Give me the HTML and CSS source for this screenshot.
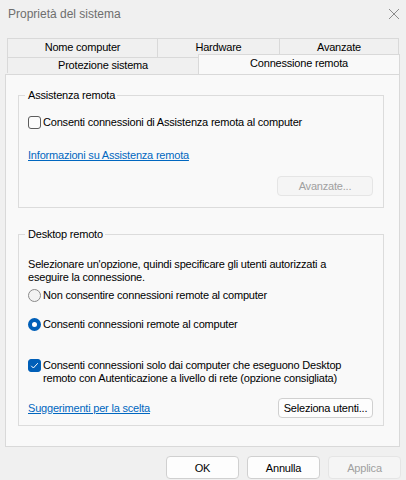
FILE: index.html
```html
<!DOCTYPE html>
<html>

<head>
    <meta charset="utf-8">
    <title>Proprietà del sistema</title>
    <link rel="stylesheet" href="styles.css">
</head>

<body>
    <div class="window">
        <div class="titlebar">
            <span class="title">Proprietà del sistema</span>
            <svg class="close" width="12" height="12" viewBox="0 0 12 12">
                <path d="M1 1 L11 11 M11 1 L1 11" stroke="#8c8c8c" stroke-width="1" fill="none" />
            </svg>
        </div>

        <div class="tabs">
            <div class="tab-row back">
                <div class="tab tab-name">Nome computer</div>
                <div class="tab tab-hw">Hardware</div>
                <div class="tab tab-adv">Avanzate</div>
            </div>
            <div class="tab-row front">
                <div class="tab tab-prot">Protezione sistema</div>
                <div class="tab tab-conn active">Connessione remota</div>
            </div>
        </div>

        <div class="panel">
            <fieldset class="group assist">
                <legend>Assistenza remota</legend>

                <div class="option first">
                    <span class="check"></span>
                    <span>Consenti connessioni di Assistenza remota al computer</span>
                </div>

                <a class="link info" href="#">Informazioni su Assistenza remota</a>

                <div class="actions right">
                    <button class="btn disabled adv">Avanzate...</button>
                </div>
            </fieldset>

            <fieldset class="group desktop">
                <legend>Desktop remoto</legend>

                <p class="intro">Selezionare un'opzione, quindi specificare gli utenti autorizzati a<br>eseguire la connessione.</p>

                <div class="option radio-no">
                    <span class="radio"></span>
                    <span>Non consentire connessioni remote al computer</span>
                </div>

                <div class="option radio-yes">
                    <span class="radio on"></span>
                    <span>Consenti connessioni remote al computer</span>
                </div>

                <div class="option nla">
                    <span class="check on">
                        <svg width="9" height="9" viewBox="0 0 9 9">
                            <path d="M1.2 4.8 L3.4 7 L7.8 2.2" stroke="#fff" stroke-width="1" fill="none" />
                        </svg>
                    </span>
                    <span>Consenti connessioni solo dai computer che eseguono Desktop<br>remoto con Autenticazione a livello di rete (opzione consigliata)</span>
                </div>

                <div class="actions split">
                    <a class="link" href="#">Suggerimenti per la scelta</a>
                    <button class="btn users">Seleziona utenti...</button>
                </div>
            </fieldset>
        </div>

        <div class="footer">
            <button class="btn dlg">OK</button>
            <button class="btn dlg">Annulla</button>
            <button class="btn dlg disabled">Applica</button>
        </div>
    </div>
</body>

</html>
```

FILE: styles.css
```css
body {
    margin: 0;
    font-family: "Liberation Sans", Arial, sans-serif;
    font-size: 11px;
    letter-spacing: -0.2px;
    color: #000;
    background-color: #f0f0f0;
}

.window {
    width: 406px;
    height: 480px;
    overflow: hidden;
}

.titlebar {
    display: flex;
    align-items: center;
    justify-content: space-between;
    height: 30px;
    padding: 0 6px 0 8px;
    box-sizing: border-box;
}

.title {
    font-size: 12px;
    letter-spacing: 0;
    color: #6e6e6e;
    margin-top: -2px;
}

.close {
    margin-top: -3px;
}

/* Tabs */
.tabs {
    margin: 8px 0 0 7px;
}

.tab-row {
    display: flex;
    align-items: flex-start;
}

.tab {
    box-sizing: border-box;
    border: 1px solid #d9d9d9;
    border-bottom: none;
    background-color: #f0f0f0;
    text-align: center;
    line-height: 17px;
}

.back .tab {
    height: 19px;
}

.tab-name { width: 151px; }
.tab-hw { width: 123px; margin-left: -1px; }
.tab-adv { width: 120px; margin-left: -1px; }

.front .tab {
    height: 16px;
    line-height: 15px;
}

.tab-prot { width: 192px; }

.front .tab.active {
    position: relative;
    z-index: 1;
    width: 202px;
    height: 20px;
    margin: -3px 0 0 -1px;
    background-color: #f9f9f9;
    line-height: 17px;
}

/* Panel */
.panel {
    box-sizing: border-box;
    width: 395px;
    height: 373px;
    margin-left: 5px;
    padding: 13px 15px 0 12px;
    border: 1px solid #d9d9d9;
    background-color: #f9f9f9;
}

.group {
    margin: 0;
    min-width: 0;
    border: 1px solid #dcdcdc;
    padding: 0 10px 11px 9px;
}

.group legend {
    margin-left: -3px;
    padding: 0 2px 0 3px;
    line-height: 14px;
}

.desktop {
    margin-top: 19px;
    padding-bottom: 7px;
}

.option {
    display: flex;
    align-items: flex-start;
    gap: 2px;
    line-height: 13px;
}

.first { margin-top: 14px; }

.check,
.radio {
    flex: none;
    box-sizing: border-box;
    width: 13px;
    height: 13px;
    display: flex;
    align-items: center;
    justify-content: center;
}

.check {
    border: 1px solid #5c5c5c;
    border-radius: 3px;
    background-color: #fbfbfb;
}

.check.on {
    border-color: #005fb8;
    background-color: #005fb8;
}

.radio {
    border: 1px solid #8a8a8a;
    border-radius: 50%;
    background-color: #f3f3f3;
}

.radio.on {
    border: 4px solid #005fb8;
    background-color: #fff;
}

.link {
    display: block;
    color: #0067c0;
    line-height: 14px;
}

.info { margin-top: 19px; }

.actions {
    display: flex;
    align-items: center;
    margin-top: 14px;
}

.actions.right {
    justify-content: flex-end;
}

.actions.split {
    justify-content: space-between;
    margin-top: 13px;
}

.intro {
    margin: 17px 0 0;
    line-height: 13px;
}

.radio-no { margin-top: 5px; }
.radio-yes { margin-top: 16px; }
.nla { margin-top: 28px; }

.btn {
    font-family: inherit;
    font-size: 11px;
    letter-spacing: inherit;
    color: #000;
    height: 20px;
    padding: 0;
    border: 1px solid #d0d0d0;
    border-radius: 4px;
    background-color: #fdfdfd;
}

.btn.disabled {
    color: #a0a0a0;
    border-color: #e5e5e5;
    background-color: #f5f5f5;
}

.adv { width: 96px; }
.users { width: 95px; }

.footer {
    display: flex;
    justify-content: flex-end;
    gap: 8px;
    margin-top: 9px;
    padding-right: 5px;
}

.btn.dlg {
    width: 73px;
    height: 23px;
}
```
